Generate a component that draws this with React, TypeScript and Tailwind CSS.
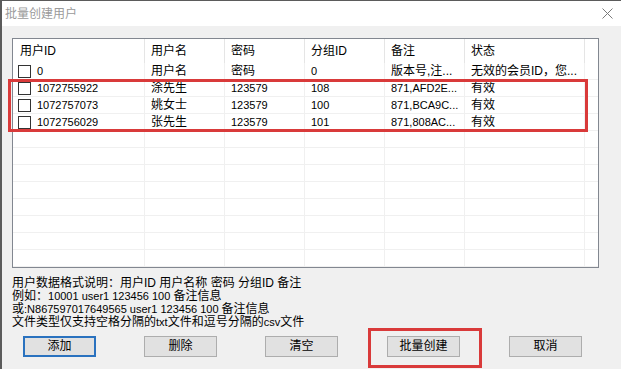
import React from "react";

const FONT = "font-['Liberation_Sans','Noto_Sans_CJK_SC',sans-serif]";

const widths = ["w-[132px]", "w-[80px]", "w-[80px]", "w-[80px]", "w-[80px]", "w-[120px]"];
const headers = ["用户ID", "用户名", "密码", "分组ID", "备注", "状态"];
const rows: string[][] = [
  ["0", "用户名", "密码", "0", "版本号,注...", "无效的会员ID，您..."],
  ["1072755922", "涂先生", "123579", "108", "871,AFD2E...", "有效"],
  ["1072757073", "姚女士", "123579", "100", "871,BCA9C...", "有效"],
  ["1072756029", "张先生", "123579", "101", "871,808AC...", "有效"],
];

const hasCJK = (s: string) => /[\u3000-\u9fff\uff00-\uffef]/.test(s);

function Cell({ text, i }: { text: string; i: number }) {
  const size = hasCJK(text) ? "text-[12px]" : "text-[11px]";
  return (
    <div
      className={`${widths[i]} shrink-0 h-full border-r border-[#f0f0f0] flex items-center overflow-hidden whitespace-nowrap ${
        i === 0 ? "pl-[5px]" : "pl-[6px]"
      }`}
    >
      {i === 0 && <div className="w-[13px] h-[13px] border border-[#333] bg-white shrink-0 mr-[6px]" />}
      <span className={`${size} leading-[17px] pt-[1px]`}>{text}</span>
    </div>
  );
}

function Btn({ label, className = "", primary = false }: { label: string; className?: string; primary?: boolean }) {
  return (
    <div
      className={`w-[73px] h-[21px] bg-[#e1e1e1] flex items-center justify-center text-[12px] leading-[21px] ${
        primary ? "border-2 border-[#2a72bf]" : "border border-[#adadad]"
      } ${className}`}
    >
      {label}
    </div>
  );
}

export default function App() {
  const empty = Array.from({ length: 8 });
  return (
    <div
      className={`relative w-[621px] h-[369px] overflow-hidden bg-[#f0f0f0] border-l-2 border-t border-[#5b5b5b] text-black ${FONT}`}
    >
      {/* title bar */}
      <div className="h-[25px] bg-white flex items-center justify-between pl-[3px] pr-[8px]">
        <span className="text-[12px] leading-[16px] text-[#9a9a9a]">批量创建用户</span>
        <svg width="11" height="11" viewBox="0 0 11 11">
          <path d="M0.5 0.5 L10.5 10.5 M10.5 0.5 L0.5 10.5" stroke="#7a7a7a" strokeWidth="1" fill="none" />
        </svg>
      </div>

      <div className="pl-[10px] pt-[12px]">
        {/* list view */}
        <div className="w-[587px] h-[230px] border border-[#828790] bg-white flex flex-col overflow-hidden">
          <div className="h-[24px] flex shrink-0">
            {headers.map((h, i) => (
              <div
                key={h}
                className={`${widths[i]} shrink-0 h-full border-r border-[#e5e5e5] flex items-center whitespace-nowrap ${
                  i === 0 ? "pl-[7px]" : "pl-[6px]"
                } text-[12px]`}
              >
                {h}
              </div>
            ))}
            <div className="flex-1" />
          </div>
          {rows.map((r, ri) => (
            <div key={ri} className="h-[17px] flex shrink-0 border-b border-[#f0f0f0] box-border">
              {r.map((c, i) => (
                <Cell key={i} text={c} i={i} />
              ))}
              <div className="flex-1" />
            </div>
          ))}
          {empty.map((_, ri) => (
            <div key={"e" + ri} className="h-[17px] flex shrink-0 border-b border-[#f0f0f0]">
              {widths.map((w, i) => (
                <div key={i} className={`${w} shrink-0 h-full border-r border-[#f0f0f0]`} />
              ))}
              <div className="flex-1" />
            </div>
          ))}
        </div>

        {/* description */}
        <div className="mt-[9px] text-[12px] leading-[13px] whitespace-nowrap">
          <div>用户数据格式说明：用户ID 用户名称 密码 分组ID 备注</div>
          <div>
            例如：<span className="text-[11px]">10001 user1 123456 100 </span>备注信息
          </div>
          <div>
            或<span className="text-[11px]">:N867597017649565 user1 123456 100 </span>备注信息
          </div>
          <div>
            文件类型仅支持空格分隔的<span className="text-[11px]">txt</span>文件和逗号分隔的
            <span className="text-[11px]">csv</span>文件
          </div>
        </div>

        {/* buttons */}
        <div className="mt-[7px] flex">
          <Btn label="添加" primary className="ml-[11px] w-[72px]" />
          <Btn label="删除" className="ml-[48px]" />
          <Btn label="清空" className="ml-[48px]" />
          <div className="relative ml-[49px]">
            <Btn label="批量创建" />
            <div className="absolute left-[-19px] top-[-8px] w-[114px] h-[40px] border-[3px] border-[#d93a3a]" />
          </div>
          <Btn label="取消" className="ml-[49px]" />
        </div>
      </div>

      {/* red highlight around rows */}
      <div className="absolute left-[6px] top-[78px] w-[580px] h-[53px] border-[3px] border-[#d93a3a]" />
    </div>
  );
}
